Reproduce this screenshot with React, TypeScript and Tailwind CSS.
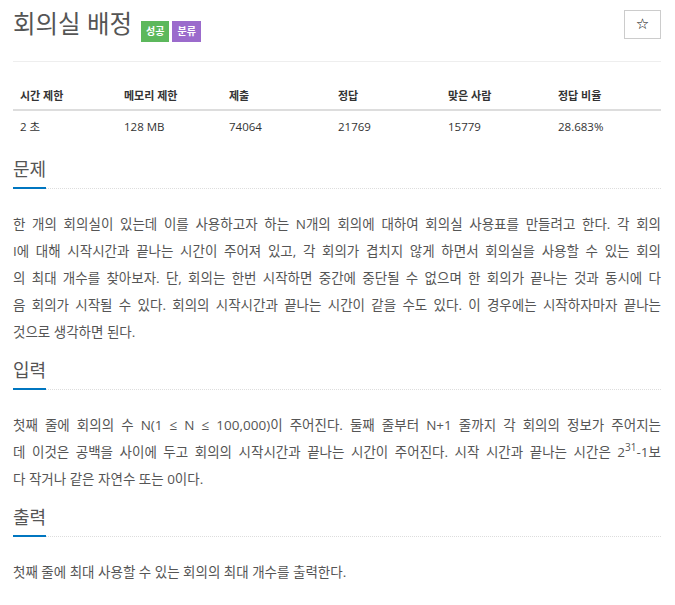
const font = "font-['Open_Sans','Noto_Sans_CJK_KR',sans-serif]"

const stats = [
  { label: '시간 제한', value: '2 초' },
  { label: '메모리 제한', value: '128 MB' },
  { label: '제출', value: '74064' },
  { label: '정답', value: '21769' },
  { label: '맞은 사람', value: '15779' },
  { label: '정답 비율', value: '28.683%' },
]

function Headline({ title }: { title: string }) {
  return (
    <h2 className="mt-[12px] flex border-b border-dotted border-[#ddd] text-[18px] font-normal leading-[24px] text-[#555]">
      <span className="-mb-px border-b-2 border-[#0076c0] pb-[6px]">{title}</span>
    </h2>
  )
}

function Line({ children, last }: { children: React.ReactNode; last?: boolean }) {
  return (
    <div
      className={
        last
          ? 'whitespace-nowrap'
          : 'whitespace-nowrap text-justify [text-align-last:justify]'
      }
    >
      {children}
    </div>
  )
}

export default function App() {
  return (
    <div className={`${font} min-h-[605px] bg-white pl-[13px] pr-[14px] pt-[9px] text-[#555]`}>
      <div className="flex items-start justify-between">
        <div className="flex items-start">
          <h1 className="text-[24.5px] font-normal leading-[30px] text-[#555]">회의실 배정</h1>
          <div className="ml-[9px] mt-[12px] flex gap-[3px]">
            <span className="h-[21px] bg-[#5cb85c] px-[5px] text-[10px] font-bold leading-[21px] text-white">성공</span>
            <span className="h-[21px] bg-[#9b6bcc] px-[5px] text-[10px] font-bold leading-[21px] text-white">분류</span>
          </div>
        </div>
        <button className="mt-px flex h-[29px] w-[37px] items-center justify-center border border-[#ccc] bg-white font-['DejaVu_Sans',sans-serif] text-[15px] font-bold text-black">
          ☆
        </button>
      </div>

      <hr className="mt-[19px] border-t border-[#eee]" />

      <div className="mt-[17px] grid grid-cols-[104px_105px_109px_110px_110px_110px]">
        {stats.map((s) => (
          <div
            key={s.label}
            className="border-b-2 border-[#ddd] pb-[3px] pl-[7px] pt-[7px] text-[11px] font-bold leading-[20px] text-[#333]"
          >
            {s.label}
          </div>
        ))}
        {stats.map((s) => (
          <div key={s.value} className="pb-[8px] pl-[7px] pt-[6px] text-[11.5px] leading-[20px] text-[#333]">
            {s.value}
          </div>
        ))}
      </div>

      <div className="mt-[4px]">
        <Headline title="문제" />
        <div className="mt-[22px] text-[13.5px] leading-[27px]">
          <Line>한 개의 회의실이 있는데 이를 사용하고자 하는 N개의 회의에 대하여 회의실 사용표를 만들려고 한다. 각 회의</Line>
          <Line>I에 대해 시작시간과 끝나는 시간이 주어져 있고, 각 회의가 겹치지 않게 하면서 회의실을 사용할 수 있는 회의</Line>
          <Line>의 최대 개수를 찾아보자. 단, 회의는 한번 시작하면 중간에 중단될 수 없으며 한 회의가 끝나는 것과 동시에 다</Line>
          <Line>음 회의가 시작될 수 있다. 회의의 시작시간과 끝나는 시간이 같을 수도 있다. 이 경우에는 시작하자마자 끝나는</Line>
          <Line last>것으로 생각하면 된다.</Line>
        </div>
      </div>

      <div>
        <Headline title="입력" />
        <div className="mt-[22px] text-[13.5px] leading-[27px]">
          <Line>첫째 줄에 회의의 수 N(1 ≤ N ≤ 100,000)이 주어진다. 둘째 줄부터 N+1 줄까지 각 회의의 정보가 주어지는</Line>
          <Line>
            데 이것은 공백을 사이에 두고 회의의 시작시간과 끝나는 시간이 주어진다. 시작 시간과 끝나는 시간은 2
            <sup className="top-[-6px] text-[10px]">31</sup>-1보
          </Line>
          <Line last>다 작거나 같은 자연수 또는 0이다.</Line>
        </div>
      </div>

      <div>
        <Headline title="출력" />
        <div className="mt-[22px] text-[13.5px] leading-[27px]">
          <Line last>첫째 줄에 최대 사용할 수 있는 회의의 최대 개수를 출력한다.</Line>
        </div>
      </div>
    </div>
  )
}
